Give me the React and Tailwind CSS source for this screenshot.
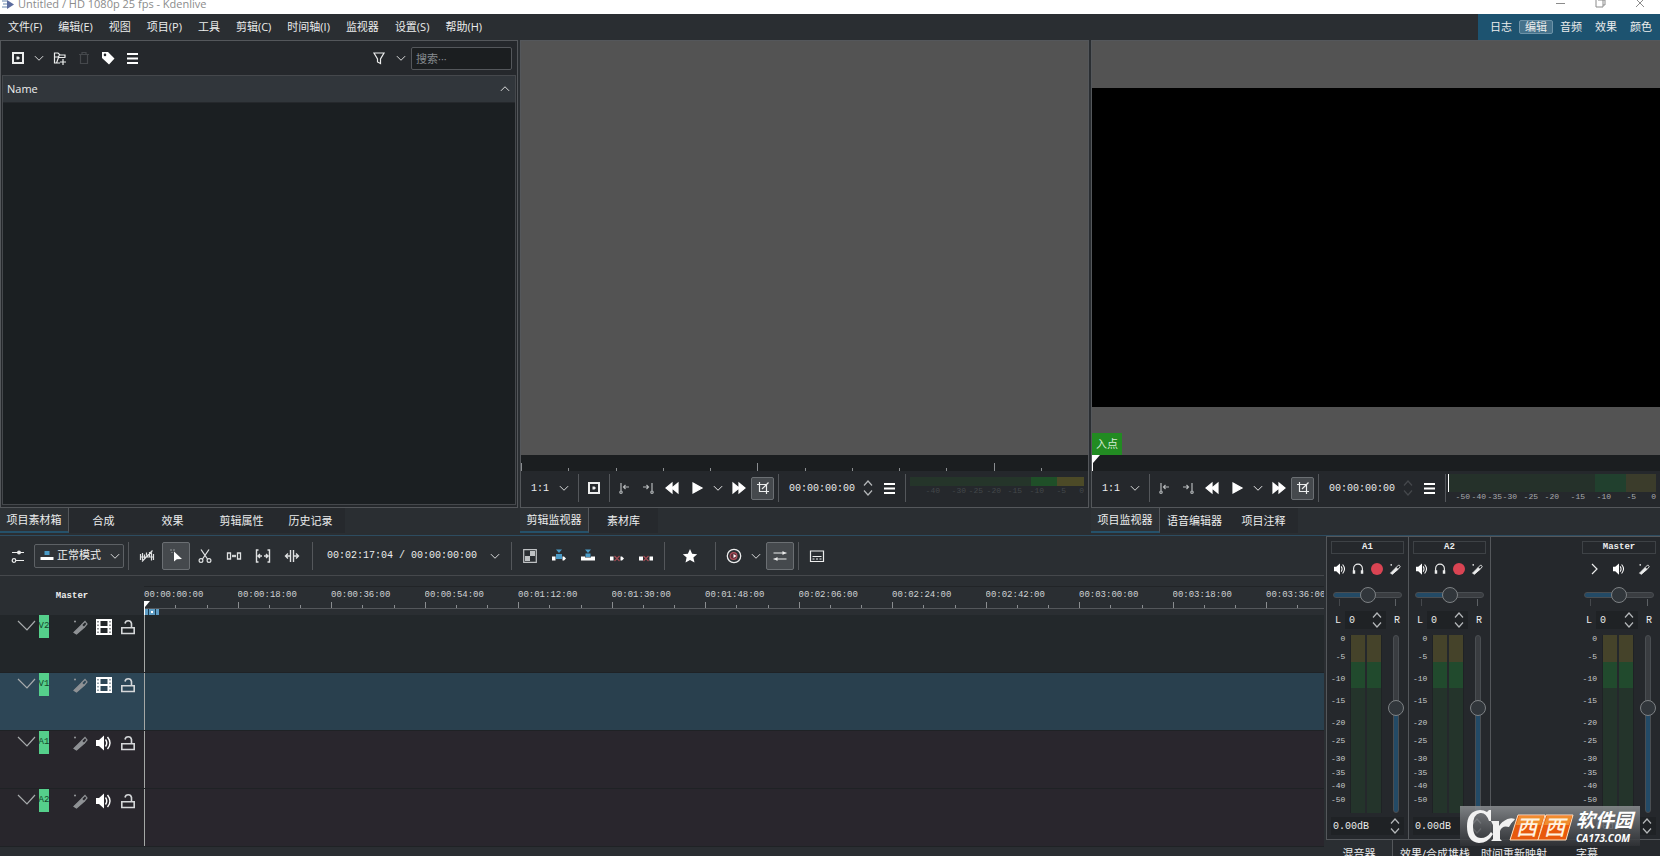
import React from "react";
import clsx from "clsx";

const MENUS = ["文件(F)", "编辑(E)", "视图", "项目(P)", "工具", "剪辑(C)", "时间轴(I)", "监视器", "设置(S)", "帮助(H)"];
const WORKSPACES = ["日志", "编辑", "音频", "效果", "颜色"];
const TIMES = [
    "00:00:00:00", "00:00:18:00", "00:00:36:00", "00:00:54:00", "00:01:12:00", "00:01:30:00", "00:01:48:00",
    "00:02:06:00", "00:02:24:00", "00:02:42:00", "00:03:00:00", "00:03:18:00", "00:03:36:00",
];
const TRACKS = [
    { name: "V2", video: true, head: "bg-[#222629]", lane: "bg-[#23282b]" },
    { name: "V1", video: true, head: "bg-[#2d4656]", lane: "bg-[#29404e]" },
    { name: "A1", video: false, head: "bg-[#28262c]", lane: "bg-[#29262d]" },
    { name: "A2", video: false, head: "bg-[#28262c]", lane: "bg-[#29262d]" },
];
const DB_SCALE = [
    ["0", "h-[18px]"], ["-5", "h-[22px]"], ["-10", "h-[22px]"], ["-15", "h-[22px]"], ["-20", "h-[18px]"],
    ["-25", "h-[18px]"], ["-30", "h-[14px]"], ["-35", "h-[13px]"], ["-40", "h-[14px]"], ["-50", "h-[13px]"],
];

/* Icons */
const ICONS = {
    down: <path d="M2.500 5.500L8 11l5.500-5.500" />,
    up: <path d="M2.500 10.500L8 5l5.500 5.500" />,
    right: <path d="M6 3l5 5-5 5" />,
    zone: (
        <>
            <path d="M3 3h10v10H3z" strokeWidth="2" />
            <path d="M6.500 6.500h2l1.500 1.500-1.500 1.500h-2z" fill="currentColor" stroke="none" />
        </>
    ),
    folder: <path d="M8 13H2.500V3H6l2 2h5v2M2.500 7H6l1.500-1.500M13.500 7.500H6.500L4.500 13M11 9v6M8 12h6" />,
    trash: <path d="M3 4.500h10M6 4V2.500h4V4M4.500 5v8.500h7V5" />,
    tag: (
        <path fillRule="evenodd" d="M2 2h6l6.500 6.500-5.500 6L2 8zM5 3.600a1.300 1.300 0 100 2.600 1.300 1.300 0 000-2.600z" fill="currentColor" stroke="none" />
    ),
    menu: <path d="M3 4h11M3 8.500h11M3 13h11" strokeWidth="2.200" />,
    filter: <path d="M3 3h10L9.500 9v4.500L6.500 12V9z" />,
    rewind: <path d="M8 3v10L2 8zM14 3v10L8 8z" fill="currentColor" />,
    play: <path d="M4 3l9 5-9 5z" fill="currentColor" />,
    forward: <path d="M2 3v10l6-5zM8 3v10l6-5z" fill="currentColor" />,
    zoneIn: <path d="M5 3v8M13 7H7.500M9.500 5l-2 2 2 2M5 11a1.200 1.200 0 100 2.400A1.200 1.200 0 005 11" />,
    zoneOut: <path d="M12 3v8M3 7h5.500M6.500 5l2 2-2 2M12 11a1.200 1.200 0 100 2.400 1.200 1.200 0 000-2.400" />,
    crop: <path d="M4.500 2v9.500H14M2 4.500h9.500V14M13.500 2.500L7 9" />,
    sliders: (
        <>
            <path d="M2 4.500h12M2 12.500h12" />
            <circle cx="9" cy="4.500" r="2" fill="currentColor" stroke="none" />
            <circle cx="4" cy="12.500" r="1.800" fill="#2a2e32" />
        </>
    ),
    overwrite: (
        <>
            <path d="M5.500 3h5v4h-5z" fill="#4a9bc7" stroke="none" />
            <path d="M1.500 9h13v3h-13z" fill="#fff" stroke="none" />
        </>
    ),
    mixOff: <path d="M1.500 6v6M3.500 5v7M1 9h14M5.500 6.500v5M10.500 4v5M12.500 4.500v8M14.500 6v6M7.500 4.500v3M3 13.500L13.500 2.500" />,
    pointer: (
        <>
            <path d="M6 3.500v10l2.800-2.300L14 11z" fill="#fff" stroke="none" />
            <path d="M2.500 2h1M4 4.500V5M5.500 2h1" />
        </>
    ),
    scissors: (
        <>
            <path d="M4 1.500l6.500 9.500M12 1.500L5.500 11" strokeWidth="1.300" />
            <circle cx="4" cy="12.500" r="1.900" />
            <circle cx="12" cy="12.500" r="1.900" />
        </>
    ),
    spacer: <path d="M1.500 5h3v6h-3zM11.500 5h3v6h-3zM6 8h4M7 6.800v2.400M9 6.800v2.400" strokeWidth="1.300" />,
    ripple: <path d="M3.500 2H1.500v12h2M12.500 2h2v12h-2M3 8h4M5 6L3 8l2 2M13 8H9M11 6l2 2-2 2" strokeWidth="1.400" />,
    slip: <path d="M6.500 2v12M9.500 2v12M6 8H1.500M4 5.500L1.500 8 4 10.500M10 8h4.500M12 5.500L14.500 8 12 10.500" strokeWidth="1.400" />,
    composite: (
        <>
            <path d="M1.700 1.700h12.600v12.600H1.700z" strokeWidth="1.200" />
            <path d="M8 3h5v5H8zM3 8h5v5H3z" fill="currentColor" stroke="none" />
        </>
    ),
    insert: (
        <>
            <path d="M5 1.500h6L8 5zM5 6h6v5H5z" fill="#4a9bc7" stroke="none" />
            <path d="M1 8.500h3.500v4H1zM11.500 8.500H13l2 2-2 2h-1.500z" fill="#fff" stroke="none" />
        </>
    ),
    overwriteZone: (
        <>
            <path d="M5 1.500h6L8 5zM5.500 5.500h5V9h-5z" fill="#4a9bc7" stroke="none" />
            <path d="M1 8.500h4v1h6v-1h4v4H1z" fill="#fff" stroke="none" />
        </>
    ),
    extract: (
        <>
            <path d="M1 8.500h3.500v4H1zM11.500 8.500H13l2 2-2 2h-1.500z" fill="#fff" stroke="none" />
            <path d="M5.500 8l5 5M10.500 8l-5 5" stroke="#a34a52" />
        </>
    ),
    lift: (
        <>
            <path d="M1 8.500h4v4H1zM11.500 8.500H15v4h-3.500z" fill="#fff" stroke="none" />
            <path d="M5.500 8l5 5M10.500 8l-5 5" stroke="#a34a52" />
        </>
    ),
    star: <path d="M8 1l2.100 4.700 5.100.5-3.800 3.400 1.100 5L8 12l-4.500 2.600 1.100-5L.8 6.200l5.100-.5z" fill="#fff" stroke="none" />,
    preview: (
        <>
            <circle cx="8" cy="8" r="6.700" strokeWidth="1.300" />
            <circle cx="7.500" cy="8" r="3.400" fill="#5c2c36" stroke="#b0515c" />
            <path d="M7.500 6L10.500 8l-3 2z" fill="#fff" stroke="none" />
        </>
    ),
    mixerLines: (
        <>
            <path d="M1.500 5h13M1.500 11h13" strokeWidth="1.200" />
            <path d="M10.500 3l3.500 2-3.500 2zM5.500 9L2 11l3.500 2z" fill="currentColor" stroke="none" />
        </>
    ),
    subtitle: <path d="M1.500 3h13v10.500h-13zM3.500 8.500h9M3.500 11h2M7 11h2M10.500 11h2" />,
    wand: (
        <>
            <path d="M2 13.500L9.500 6l2.500 2.500L4.500 15z" fill="currentColor" />
            <path d="M9.500 6L13 2.500 15 5l-3 3.500" strokeWidth="1.200" />
            <path d="M2 2.500h2M3 1.500v2" />
        </>
    ),
    film: (
        <path
            fillRule="evenodd"
            d="M0 0h16v16H0zM4.500 2v5h7V2zM4.500 9v5h7V9zM1.500 2v1.500h1V2zM1.500 5.500V7h1V5.500zM1.500 9v1.500h1V9zM1.500 12.500V14h1v-1.500zM13.500 2v1.500h1V2zM13.500 5.500V7h1V5.500zM13.500 9v1.500h1V9zM13.500 12.500V14h1v-1.500z"
            fill="#fff"
            stroke="none"
        />
    ),
    speaker: (
        <>
            <path d="M0 5h3l5-4.500v15L3 11H0z" fill="#fff" stroke="none" />
            <path d="M9.500 4.500q2.500 3.500 0 7M11.500 2q5 6 0 12" stroke="#fff" strokeWidth="1.400" />
        </>
    ),
    lock: <path d="M1.800 8.800h12.400v5.700H1.800zM11.500 8.500V4.500a3.300 3.300 0 00-6.500 0" strokeWidth="1.600" />,
    headphones: (
        <>
            <path d="M3 12V7.500a5 5 0 0110 0V12" strokeWidth="1.300" />
            <path d="M2 9.500h2.800v4H2zM11.200 9.500H14v4h-2.800z" fill="currentColor" stroke="none" />
        </>
    ),
    record: <circle cx="8" cy="8" r="6" fill="#da4453" stroke="none" />,
};

function Icon({ name, className = "size-4" }) {
    return (
        <svg viewBox="0 0 16 16" fill="none" stroke="currentColor" strokeWidth="1.200" className={clsx("shrink-0", className)} aria-hidden="true">
            {ICONS[name]}
        </svg>
    );
}

function IconButton({ icon, label, className = "w-6", size = "size-4", active }) {
    return (
        <button
            type="button"
            aria-label={label}
            className={clsx(
                "flex shrink-0 items-center justify-center",
                active && "rounded-xs border border-[#6b6f73] bg-[#45494d]",
                className
            )}
        >
            <Icon name={icon} className={size} />
        </button>
    );
}

const Separator = ({ className = "h-7" }) => <div className={clsx("w-px shrink-0 bg-[#54575b]", className)} />;

function Spinner({ dim }) {
    return (
        <div className="flex shrink-0 flex-col gap-1">
            <button type="button" aria-label="增加" className={dim ? "text-[#45484c]" : "text-[#b5b8ba]"}>
                <svg viewBox="0 0 10 6" fill="none" stroke="currentColor" strokeWidth="1.200" className="block h-1.5 w-2.5"><path d="M1 5.500L5 1l4 4.500" /></svg>
            </button>
            <button type="button" aria-label="减少" className={dim ? "text-[#45484c]" : "text-[#b5b8ba]"}>
                <svg viewBox="0 0 10 6" fill="none" stroke="currentColor" strokeWidth="1.200" className="block h-1.5 w-2.5"><path d="M1 .5L5 5l4-4.500" /></svg>
            </button>
        </div>
    );
}

function Tabs({ items }) {
    return (
        <div role="tablist" className="flex h-[27px] shrink-0 items-start bg-[#2a2e32]">
            {items.map((item, i) => (
                <button
                    key={item}
                    type="button"
                    role="tab"
                    aria-selected={i === 0}
                    className={clsx(
                        "h-[25px] w-[69px] pt-0.5 whitespace-nowrap",
                        i === 0 ? "border-r border-b-2 border-r-[#54575b] border-b-[#25516a] bg-[#2d3135]" : "bg-[#26292d]"
                    )}
                >
                    {item}
                </button>
            ))}
        </div>
    );
}

function ProjectBin() {
    return (
        <section className="flex min-w-0 flex-[518] flex-col">
            <div className="flex min-h-0 flex-1 flex-col border border-[#54575b] bg-[#25282c] px-px pb-0.5">
                <div className="flex h-[34px] shrink-0 items-center pl-1">
                    <IconButton icon="zone" label="添加素材" />
                    <IconButton icon="down" label="添加素材选项" className="w-[18px]" size="size-3" />
                    <IconButton icon="folder" label="新建文件夹" />
                    <span className="text-[#45484c]"><IconButton icon="trash" label="删除" /></span>
                    <span className="flex text-white">
                        <IconButton icon="tag" label="标签" />
                        <IconButton icon="menu" label="选项" />
                    </span>
                    <div className="flex-1" />
                    <IconButton icon="filter" label="过滤" />
                    <IconButton icon="down" label="过滤选项" className="w-5" size="size-3" />
                    <input
                        type="text"
                        aria-label="搜索"
                        placeholder="搜索···"
                        className="mr-1 h-[23px] w-[101px] rounded-xs border border-[#54575b] bg-[#1b1e20] px-1 text-[11px] outline-none placeholder:text-[#858a8e]"
                    />
                </div>
                <div className="flex-1 border border-[#45484c] bg-[#1b1f22]">
                    <table className="w-full">
                        <thead>
                            <tr>
                                <th className="h-[26px] border-b border-[#25282c] bg-[#31363b] px-1 font-normal">
                                    <button type="button" className="flex w-full items-center justify-between">
                                        Name
                                        <Icon name="up" className="size-3" />
                                    </button>
                                </th>
                            </tr>
                        </thead>
                    </table>
                </div>
            </div>
            <Tabs items={["项目素材箱", "合成", "效果", "剪辑属性", "历史记录"]} />
        </section>
    );
}

function Transport({ zone, spinDim, children }) {
    return (
        <div className="flex h-9 shrink-0 items-center bg-[#25282c] pb-0.5">
            <button type="button" className="flex w-[57px] shrink-0 items-center justify-between pr-2 pl-2.5">
                <span className="font-['Liberation_Mono',monospace] text-[10px]">1:1</span>
                <Icon name="down" className="size-3" />
            </button>
            {zone && (
                <>
                    <Separator />
                    <IconButton icon="zone" label="区域" className="mx-[3px] w-6" />
                </>
            )}
            <Separator />
            <span className="ml-0.5 flex text-[#b5b8ba]">
                <IconButton icon="zoneIn" label="设置入点" />
                <IconButton icon="zoneOut" label="设置出点" />
            </span>
            <span className="flex gap-px text-white">
                <IconButton icon="rewind" label="后退" />
                <IconButton icon="play" label="播放" />
                <IconButton icon="down" label="播放选项" className="w-4" size="size-3" />
                <IconButton icon="forward" label="前进" />
            </span>
            <IconButton icon="crop" label="裁剪" active className="mr-1 h-[23px] w-[23px]" />
            <Separator />
            <span className="mr-2 ml-2.5 font-['Liberation_Mono',monospace] text-[10px]">00:00:00:00</span>
            <Spinner dim={spinDim} />
            <span className="mr-1 ml-1 flex text-white"><IconButton icon="menu" label="监视器选项" /></span>
            <Separator />
            {children}
        </div>
    );
}

function ClipMonitor() {
    return (
        <section className="flex min-w-0 flex-[569] flex-col">
            <div className="flex min-h-0 flex-1 flex-col border border-[#54575b] bg-[#25282c]">
                <div className="flex-1 bg-[#535353]" />
                <div className="flex h-4 shrink-0 items-end bg-[#1b1e20]">
                    {Array.from({ length: 12 }, (_, i) => (
                        <div key={i} className={clsx("flex-1 border-l border-[#8a8d90]", i % 5 === 0 ? "h-2" : "h-[3px]")} />
                    ))}
                </div>
                <Transport zone>
                    <div className="mr-1 ml-1 min-w-0 flex-1 pb-1">
                        <div className="flex h-[9px]">
                            <div className="flex-[121] bg-[#25352a]" />
                            <div className="flex-[26] bg-[#1f4f28]" />
                            <div className="flex-[27] bg-[#4c4a27]" />
                        </div>
                        <div className="flex text-right font-['Liberation_Mono',monospace] text-[8px] leading-[10px] text-[#43474a]">
                            <span className="flex-[30]">-40</span>
                            <span className="flex-[26]">-30</span>
                            <span className="flex-[17]">-25</span>
                            <span className="flex-[18]">-20</span>
                            <span className="flex-[21]">-15</span>
                            <span className="flex-[22]">-10</span>
                            <span className="flex-[22]">-5</span>
                            <span className="flex-[18]">0</span>
                        </div>
                    </div>
                </Transport>
            </div>
            <Tabs items={["剪辑监视器", "素材库"]} />
        </section>
    );
}

function ProjectMonitor() {
    return (
        <section className="flex min-w-0 flex-[569] flex-col">
            <div className="flex min-h-0 flex-1 flex-col border border-r-0 border-[#54575b] bg-[#25282c]">
                <div className="flex flex-1 flex-col bg-[#535353] pt-[47px]">
                    <div className="flex-1 bg-black" />
                    <div className="flex h-12 items-end">
                        <span className="bg-[#228b22] px-1 leading-[22px] text-[#d5ecd5]">入点</span>
                    </div>
                </div>
                <div className="flex h-4 shrink-0 bg-[#1b1e20]">
                    <svg viewBox="0 0 8 16" className="h-4 w-2" aria-hidden="true">
                        <path d="M0 0h8L1 8v8H0z" fill="#fff" />
                    </svg>
                </div>
                <Transport spinDim>
                    <div className="mr-1 ml-0.5 min-w-0 flex-1">
                        <div className="flex h-[18px] border-l border-white">
                            <div className="flex-[147] bg-[#25312a]" />
                            <div className="flex-[31] bg-[#21402e]" />
                            <div className="flex-[30] bg-[#3b3c2b]" />
                        </div>
                        <div className="flex text-right font-['Liberation_Mono',monospace] text-[8px] leading-[10px] text-[#a5a9ac]">
                            <span className="flex-[22]">-50</span>
                            <span className="flex-[16]">-40</span>
                            <span className="flex-[16]">-35</span>
                            <span className="flex-[15]">-30</span>
                            <span className="flex-[21]">-25</span>
                            <span className="flex-[21]">-20</span>
                            <span className="flex-[26]">-15</span>
                            <span className="flex-[26]">-10</span>
                            <span className="flex-[25]">-5</span>
                            <span className="flex-[20]">0</span>
                        </div>
                    </div>
                </Transport>
            </div>
            <Tabs items={["项目监视器", "语音编辑器", "项目注释"]} />
        </section>
    );
}

function TimelineToolbar() {
    return (
        <div className="flex h-10 shrink-0 items-center border-b border-[#45484c] pl-1">
            <IconButton icon="sliders" label="轨道设置" className="w-7" />
            <label className="mr-1 ml-0.5 flex h-6 w-[90px] items-center rounded-xs border border-[#5d6165] bg-[#2f3337] pl-1">
                <Icon name="overwrite" />
                <select aria-label="编辑模式" className="flex-1 appearance-none pl-0.5 text-[11px] outline-none">
                    <option>正常模式</option>
                </select>
                <Icon name="down" className="mr-0.5 size-3" />
            </label>
            <Separator />
            <div className="mr-1.5 ml-1 flex items-center gap-px text-[#dfe1e2]">
                <IconButton icon="mixOff" label="混合" className="w-7" />
                <IconButton icon="pointer" label="选择工具" active className="h-7 w-7" />
                <IconButton icon="scissors" label="剃刀工具" className="w-7" />
                <IconButton icon="spacer" label="间隔工具" className="w-7" />
                <IconButton icon="ripple" label="波纹工具" className="w-7" />
                <IconButton icon="slip" label="滑移工具" className="w-7" />
            </div>
            <Separator />
            <button type="button" className="mr-2.5 ml-3.5 flex shrink-0 items-center gap-3">
                <span className="font-['Liberation_Mono',monospace] text-[10px] whitespace-pre">00:02:17:04 / 00:00:00:00</span>
                <Icon name="down" className="size-3" />
            </button>
            <Separator />
            <div className="mx-1 flex items-center gap-px text-[#bfc2c4]">
                <IconButton icon="composite" label="合成" className="w-7" />
                <IconButton icon="insert" label="插入区域" className="w-7" />
                <IconButton icon="overwriteZone" label="覆盖区域" className="w-7" />
                <IconButton icon="extract" label="提取区域" className="w-7" />
                <IconButton icon="lift" label="抬升区域" className="w-7" />
            </div>
            <Separator />
            <IconButton icon="star" label="收藏效果" className="mx-[11px] w-7" />
            <Separator />
            <IconButton icon="preview" label="预览渲染" className="ml-1 w-7" />
            <IconButton icon="down" label="预览选项" className="mr-0.5 w-4" size="size-3" />
            <IconButton icon="mixerLines" label="混音器" active className="mr-1 h-7 w-7" />
            <Separator />
            <IconButton icon="subtitle" label="字幕" className="ml-1 w-7" />
        </div>
    );
}

function Timeline() {
    return (
        <section className="min-w-0 flex-1">
            <TimelineToolbar />
            <div className="flex h-[39px]">
                <div className="w-36 shrink-0 pt-2.5 text-center">
                    <span className="font-['Liberation_Mono',monospace] text-[9px] font-bold">Master</span>
                </div>
                <div className="relative flex min-w-0 flex-1 flex-col">
                    <div className="mt-2.5 flex border-t border-[#212427] pt-px">
                        {TIMES.map((time, i) => (
                            <div key={time} className={clsx("min-w-0 overflow-hidden", i < 12 ? "flex-[187]" : "flex-[116]")}>
                                <div className="font-['Liberation_Mono',monospace] text-[9px] leading-[14px] text-[#cfd2d4]">{time}</div>
                                <div className="flex h-1.5 w-[94px] items-end text-[#8a8d90]">
                                    <span className="h-full flex-1 border-l" />
                                    <span className="h-[3px] flex-1 border-l" />
                                    <span className="h-[3px] flex-1 border-l" />
                                </div>
                            </div>
                        ))}
                    </div>
                    <div className="h-[7px] border-t border-[#54575b]">
                        <svg viewBox="0 0 15 6" className="block h-1.5 w-[15px]" aria-hidden="true">
                            <path d="M0 0h15v6H0z" fill="#5f9dc4" />
                            <path d="M4 0h1v6H4zM11 0h1v6h-1z" fill="#1b3a4e" />
                            <path d="M7 2h2v2H7z" fill="#fff" />
                        </svg>
                    </div>
                    {/* Playhead */}
                    <svg viewBox="0 0 6 14" className="absolute bottom-0 left-0 h-3.5 w-1.5" aria-hidden="true">
                        <path d="M0 0h6L1 6v8H0z" fill="#fff" />
                    </svg>
                </div>
            </div>
            {TRACKS.map((track) => (
                <div key={track.name} className="flex h-[58px] border-b border-[#1f2225]">
                    <div className={clsx("flex h-full w-36 shrink-0 items-start pl-[17px]", track.head)}>
                        <button type="button" aria-label={`折叠 ${track.name}`} className="mt-1 mr-[3px] text-[#a8abad]">
                            <svg viewBox="0 0 19 14" fill="none" stroke="currentColor" className="h-3.5 w-[19px]" aria-hidden="true">
                                <path d="M1 2l9 9 8-9" strokeWidth="1.200" />
                            </svg>
                        </button>
                        <span className="flex w-2.5 justify-center overflow-hidden bg-[#55cf8b] font-['Liberation_Mono',monospace] text-[9px] leading-[23px] text-[#14452a]">
                            {track.name}
                        </span>
                        <div className="ml-[23px] flex h-[23px] items-center gap-2 text-[#d5d7d9]">
                            <span className="flex text-[#8f9295]"><IconButton icon="wand" label="轨道效果" className="w-4" /></span>
                            <IconButton icon={track.video ? "film" : "speaker"} label="切换轨道" className="w-4" />
                            <IconButton icon="lock" label="锁定轨道" className="w-4" />
                        </div>
                    </div>
                    <div className={clsx("flex-1 border-l border-[#a5a8a6]", track.lane)} />
                </div>
            ))}
        </section>
    );
}

function MixerColumn({ name, master }) {
    return (
        <div className={clsx("flex w-[82px] shrink-0 flex-col pt-1 pr-1 pb-1 pl-1", !master && "border-r border-[#54575b]")}>
            <div className="h-[13px] border border-[#3e4246] text-center font-['Liberation_Mono',monospace] text-[9px] leading-[11px] font-bold">
                {name}
            </div>
            <div className="mt-1 flex h-[22px] items-center justify-around">
                {master && <IconButton icon="right" label="展开" className="w-4" />}
                <IconButton icon="speaker" label={`${name} 静音`} className="w-4" size="size-3" />
                {!master && (
                    <>
                        <IconButton icon="headphones" label={`${name} 独奏`} className="w-4" size="size-3.5" />
                        <IconButton icon="record" label={`${name} 录音`} className="w-4" />
                    </>
                )}
                <IconButton icon="wand" label={`${name} 效果`} className="w-4" size="size-3" />
            </div>
            <div className="mt-[7px] px-0.5">
                <input
                    type="range"
                    defaultValue="50"
                    aria-label={`${name} 平衡`}
                    className="block h-4 w-full appearance-none bg-transparent [&::-webkit-slider-runnable-track]:h-1.5 [&::-webkit-slider-runnable-track]:rounded-full [&::-webkit-slider-runnable-track]:border [&::-webkit-slider-runnable-track]:border-[#4a4e52] [&::-webkit-slider-runnable-track]:bg-[linear-gradient(to_right,#234a66_50%,#3a3d41_50%)] [&::-webkit-slider-thumb]:-mt-[6px] [&::-webkit-slider-thumb]:size-4 [&::-webkit-slider-thumb]:appearance-none [&::-webkit-slider-thumb]:rounded-full [&::-webkit-slider-thumb]:border [&::-webkit-slider-thumb]:border-[#7d8184] [&::-webkit-slider-thumb]:bg-[#31363b]"
                />
                <div className="-mt-1 flex h-[7px] justify-between px-1.5">
                    <span className="w-px bg-[#45484c]" />
                    <span className="w-px bg-[#5d6165]" />
                </div>
            </div>
            <div className="mt-[5px] flex h-[18px] items-center justify-between px-1 font-['Liberation_Mono',monospace] text-[10px]">
                <span className="mr-1">L</span>
                <span className="flex h-full flex-1 items-center bg-[#1f2225] pr-1">
                    <input type="text" defaultValue="0" aria-label={`${name} 平衡值`} className="w-full min-w-0 flex-1 pl-1 outline-none" />
                    <Spinner />
                </span>
                <span className="ml-2">R</span>
            </div>
            <div className="mt-1.5 flex min-h-0 flex-1">
                <div className="w-4 text-right font-['Liberation_Mono',monospace] text-[8px] leading-2 whitespace-nowrap text-[#c5c8ca]">
                    {DB_SCALE.map(([db, height]) => (
                        <div key={db} className={height}>{db}</div>
                    ))}
                </div>
                <div className="ml-[5px] flex gap-0.5 border-x border-[#1f2225]">
                    {[0, 1].map((channel) => (
                        <div key={channel} className="flex w-3.5 flex-col">
                            <div className="h-[15%] bg-[#45432a]" />
                            <div className="h-[15%] bg-[#214a2d]" />
                            <div className="flex-1 bg-[#24342b]" />
                        </div>
                    ))}
                </div>
                <input
                    type="range"
                    defaultValue="60"
                    aria-label={`${name} 音量`}
                    className="ml-1.5 h-full w-4 appearance-none bg-transparent [direction:rtl] [writing-mode:vertical-lr] [&::-webkit-slider-runnable-track]:w-1.5 [&::-webkit-slider-runnable-track]:rounded-full [&::-webkit-slider-runnable-track]:border [&::-webkit-slider-runnable-track]:border-[#4a4e52] [&::-webkit-slider-runnable-track]:bg-[linear-gradient(to_top,#234a66_59%,#3a3d41_59%)] [&::-webkit-slider-thumb]:-ml-[6px] [&::-webkit-slider-thumb]:size-4 [&::-webkit-slider-thumb]:appearance-none [&::-webkit-slider-thumb]:rounded-full [&::-webkit-slider-thumb]:border [&::-webkit-slider-thumb]:border-[#7d8184] [&::-webkit-slider-thumb]:bg-[#31363b]"
                />
            </div>
            <div className="mt-1 flex h-[18px] items-center bg-[#1f2225] pr-1 font-['Liberation_Mono',monospace] text-[10px]">
                <input type="text" defaultValue="0.00dB" aria-label={`${name} 增益`} className="w-full min-w-0 flex-1 pl-0.5 outline-none" />
                <Spinner />
            </div>
        </div>
    );
}

function Mixer() {
    return (
        <section className="flex w-[334px] shrink-0 flex-col">
            <div className="flex min-h-0 flex-1 border border-r-0 border-[#54575b] bg-[#25282c]">
                <MixerColumn name="A1" />
                <MixerColumn name="A2" />
                <div className="flex-1" />
                <MixerColumn name="Master" master />
            </div>
            <div role="tablist" className="flex h-4 items-start overflow-hidden bg-[#26292d] leading-7">
                <button type="button" role="tab" aria-selected="true" className="w-[67px] border-r border-[#54575b] bg-[#2a2e32]">混音器</button>
                <button type="button" role="tab" aria-selected="false" className="w-[84px]">效果/合成堆栈</button>
                <button type="button" role="tab" aria-selected="false" className="w-[74px]">时间重新映射</button>
                <button type="button" role="tab" aria-selected="false" className="w-[72px]">字幕</button>
            </div>
        </section>
    );
}

function SiteBadge() {
    return (
        <div className="absolute right-5 bottom-2.5 flex h-10 w-[180px] items-center bg-linear-to-b from-[#8d9093]/85 to-[#303236]/85 text-white">
            <svg viewBox="0 0 116 40" className="h-10 w-[116px] shrink-0" aria-hidden="true">
                <path d="M31 4v11h-2q-3-9-9-8-7 1-7 13t8 12q6 0 10-6l2 2q-5 9-14 9Q7 36 7 20.500T20 4q4 0 7 2l2-2z" fill="#f2f2f2" />
                <path d="M31 15h8v5q4-6 8-5l5 1-3 5q-7-2-9 4v8l2 2H31l2-2V19z" fill="#f2f2f2" />
                <path d="M44 15q5-4 11-2-3 5-8 5z" fill="#f2f2f2" />
                <path d="M58 9h27l-7 25H50z" fill="#e8590c" stroke="#ffe0bd" />
                <path d="M86 9h27l-7 25H78z" fill="#e8590c" stroke="#ffe0bd" />
                <path d="M59 10h25l-3 9H56zM87 10h25l-3 9H84z" fill="#f08c2e" />
                <text x="56" y="29" fontSize="21" fontWeight="500" fontStyle="italic" fontFamily="Noto Sans CJK SC, sans-serif" fill="#fff3e0">西</text>
                <text x="84" y="29" fontSize="21" fontWeight="500" fontStyle="italic" fontFamily="Noto Sans CJK SC, sans-serif" fill="#fff3e0">西</text>
            </svg>
            <div className="font-bold italic">
                <div className="text-[19px] leading-6">软件园</div>
                <div className="text-[10px] leading-3">CA173.COM</div>
            </div>
        </div>
    );
}

export default function App() {
    return (
        <div className="relative flex h-screen flex-col overflow-hidden bg-[#2a2e32] font-['Open_Sans','Noto_Sans_CJK_SC',sans-serif] text-[11px] text-[#eceded]">
            {/* Title bar */}
            <header className="flex h-3.5 shrink-0 items-end justify-between overflow-hidden bg-white text-[#8b8b8b]">
                <div className="flex items-end gap-1 pl-0.5">
                    <svg viewBox="0 0 12 14" className="h-3.5 w-3" aria-hidden="true">
                        <path d="M0 1h5M1 4h5M0 7h5" stroke="#9ab0c9" strokeWidth="1.500" />
                        <path d="M5 0l7 4.500L5 9z" fill="#5b6c9e" />
                    </svg>
                    <h1 className="leading-5">Untitled / HD 1080p 25 fps - Kdenlive</h1>
                </div>
                <div className="flex h-full">
                    {["M3 3.500h9", "M3 0v7h7V0M5 0h7v5h-2", "M3 -1l8 8M11 -1l-8 8"].map((d, i) => (
                        <button key={d} type="button" aria-label={["最小化", "还原", "关闭"][i]} className="flex w-10 justify-center">
                            <svg viewBox="0 0 14 14" fill="none" stroke="currentColor" className="size-3.5"><path d={d} /></svg>
                        </button>
                    ))}
                </div>
            </header>

            {/* Menu bar */}
            <nav className="flex h-[26px] shrink-0 justify-between">
                <div className="flex items-center gap-4 pl-2">
                    {MENUS.map((menu) => (
                        <button key={menu} type="button" className="whitespace-nowrap">{menu}</button>
                    ))}
                </div>
                <div className="flex items-center gap-px bg-[#1d5370] pr-0.5 pl-1.5">
                    {WORKSPACES.map((space) => (
                        <button
                            key={space}
                            type="button"
                            className={clsx("w-[34px] rounded-xs leading-3", space === "编辑" && "border border-[#6d93a8] bg-[#45728b]")}
                        >
                            {space}
                        </button>
                    ))}
                </div>
            </nav>

            <main className="flex min-h-0 flex-1 gap-0.5">
                <ProjectBin />
                <ClipMonitor />
                <ProjectMonitor />
            </main>

            <div className="flex h-[321px] shrink-0 gap-0.5 border-t border-[#2d4c60]">
                <Timeline />
                <Mixer />
            </div>

            <SiteBadge />
        </div>
    );
}
